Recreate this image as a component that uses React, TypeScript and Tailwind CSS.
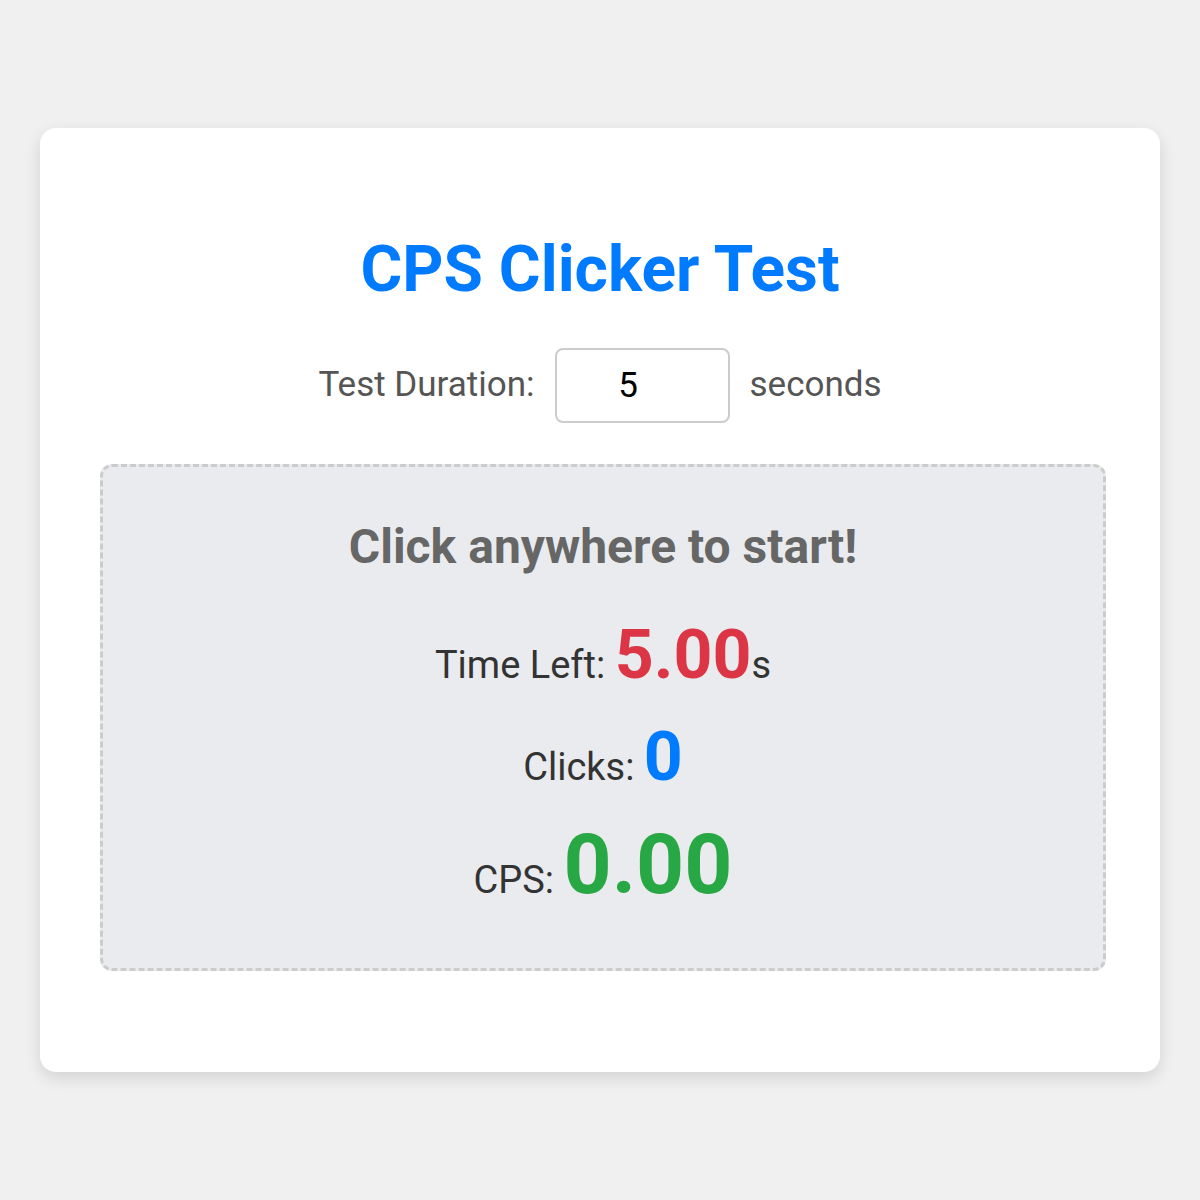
import { useState } from "react";

export default function App() {
  const [duration, setDuration] = useState("5");

  return (
    <div
      className="min-h-screen bg-[#f0f0f0] px-10 pt-32"
      style={{ fontFamily: "Roboto, 'Noto Sans', sans-serif" }}
    >
      <div className="bg-white rounded-2xl shadow-[0_6px_16px_rgba(0,0,0,0.12)] px-[60px] pt-[110px] pb-[101px] flex flex-col items-center">
        <h1 className="text-[64px] leading-none font-bold text-[#007bff]">
          CPS Clicker Test
        </h1>

        <div className="mt-[46px] flex items-center gap-5 text-[35px] text-[#555]">
          <span>Test Duration:</span>
          <input
            type="number"
            value={duration}
            onChange={(e) => setDuration(e.target.value)}
            className="w-[175px] h-[75px] border-2 border-[#ccc] rounded-lg pr-[28px] text-center text-black text-[35px] outline-none [appearance:textfield] [&::-webkit-inner-spin-button]:appearance-none"
          />
          <span>seconds</span>
        </div>

        {/* Click area */}
        <div className="mt-[41px] self-start w-[1006px] h-[507px] border-[3px] border-dashed border-[#ccc] rounded-xl bg-[#e9ebee] flex flex-col items-center pt-[56px]">
          <h2 className="text-[48px] leading-none font-bold text-[#666]">
            Click anywhere to start!
          </h2>
          <div className="mt-[50px] text-[38px] text-[#333] leading-none">
            Time Left:{" "}
            <span className="text-[68px] font-bold text-[#dc3545]">5.00</span>s
          </div>
          <div className="mt-[34px] text-[38px] text-[#333] leading-none">
            Clicks: <span className="text-[68px] font-bold text-[#007bff]">0</span>
          </div>
          <div className="mt-[32px] text-[38px] text-[#333] leading-none">
            CPS: <span className="text-[84px] font-bold text-[#28a745]">0.00</span>
          </div>
        </div>
      </div>
    </div>
  );
}
